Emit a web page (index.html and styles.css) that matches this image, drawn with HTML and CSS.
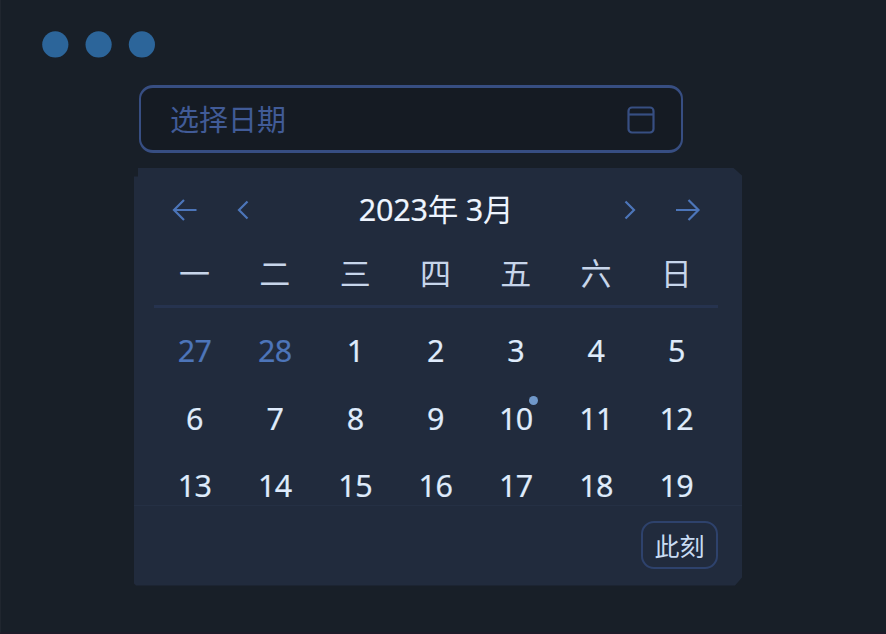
FILE: index.html
```html
<!DOCTYPE html>
<html lang="zh-CN">
<head>
<meta charset="utf-8">
<title>选择日期</title>
<link rel="stylesheet" href="styles.css">
</head>
<body>
<main class="window">
  <svg class="dots" width="114" height="27" viewBox="0 0 114 27"><circle cx="13.3" cy="13.4" r="13.1"/><circle cx="56.6" cy="13.4" r="13.1"/><circle cx="99.9" cy="13.4" r="13.1"/></svg>
  <div class="field">
    <span class="placeholder">选择日期</span>
    <svg class="calendar-icon" width="28" height="28" viewBox="0 0 28 28"><rect x="1.5" y="1.5" width="25" height="25" rx="3.5"/><path d="M1.5 8.5H26.5"/></svg>
  </div>
  <section class="panel">
    <header class="header">
      <svg class="arrow" width="26" height="24" viewBox="0 0 26 24"><path d="M12 2 2 12l10 10M2 12h22.5"/></svg>
      <svg class="chevron prev" width="12" height="24" viewBox="0 0 12 24"><path d="M10.5 3.5 2 12l8.5 8.5"/></svg>
      <h1 class="title">2023<span class="han">年</span> 3<span class="han">月</span></h1>
      <svg class="chevron next" width="12" height="24" viewBox="0 0 12 24"><path d="M1.5 3.5 10 12l-8.5 8.5"/></svg>
      <svg class="arrow" width="26" height="24" viewBox="0 0 26 24"><path d="M13.5 2l10 10-10 10M23.5 12H1"/></svg>
    </header>
    <div class="week"><span>一</span><span>二</span><span>三</span><span>四</span><span>五</span><span>六</span><span>日</span></div>
    <div class="days">
      <span class="muted">27</span><span class="muted">28</span><span>1</span><span>2</span><span>3</span><span>4</span><span>5</span>
      <span>6</span><span>7</span><span>8</span><span>9</span><span class="today">10</span><span>11</span><span>12</span>
      <span>13</span><span>14</span><span>15</span><span>16</span><span>17</span><span>18</span><span>19</span>
    </div>
    <footer class="footer"><button class="now">此刻</button></footer>
  </section>
</main>
</body>
</html>
```

FILE: styles.css
```css
* { box-sizing: border-box; }

body {
  margin: 0;
  background: #181f28;
  font-family: "Noto Sans", "Noto Sans CJK SC", sans-serif;
}

.window {
  height: 634px;
  padding: 31px 0 0 134px;
  border-left: 1px solid #20262f;
  border-bottom: 2px solid #1d1b29;
  overflow: hidden;
}

.dots {
  display: block;
  margin-left: -93px;
  fill: #2c659a;
}

.field {
  display: flex;
  align-items: center;
  justify-content: space-between;
  width: 544px;
  height: 68px;
  margin: 27px 0 0 4px;
  padding: 1px 26px 0 29px;
  border: 2px solid #374e82;
  border-top-width: 3px;
  border-bottom-width: 3px;
  border-radius: 14px;
  background: #151b23;
}

.placeholder {
  margin-top: -3px;
  color: #415b97;
  font: 29px/40px "Noto Sans CJK SC", sans-serif;
}

.calendar-icon {
  fill: none;
  stroke: #374f82;
  stroke-width: 2.2;
}

.panel {
  width: 608px;
  height: 418px;
  margin: 14.6px 0 0 -1px;
  padding: 21.4px 24px 0 20px;
  background: #212b3d;
  clip-path: polygon(4px 0, 599px 0, 608px 8px, 608px 410px, 601px 418px, 2px 418px, 0 416px, 0 9px, 4px 9px);
}

.header {
  display: flex;
  align-items: center;
  height: 42px;
  padding: 0 17px 0 18px;
}

.arrow, .chevron {
  flex: none;
  fill: none;
  stroke: #4c75b9;
  stroke-width: 2.2;
}

.prev { margin-left: 39px; }
.next { margin-right: 39px; }

.title {
  flex: 1;
  margin: -3px 0 0 -1px;
  color: #eef5ff;
  font-size: 30.5px;
  font-weight: 400;
  line-height: 40px;
  letter-spacing: -0.2px;
  text-align: center;
  -webkit-text-stroke: 0.2px;
}

.han {
  font-family: "Noto Sans CJK SC", sans-serif;
  -webkit-text-stroke: 0;
}

.week, .days {
  display: grid;
  grid-template-columns: repeat(7, 80.3px);
  text-align: center;
}

.week {
  height: 77px;
  border-bottom: 3px solid #26334f;
  color: #c7d5ea;
  font: 31px/82px "Noto Sans CJK SC", sans-serif;
  text-indent: 0.8px;
}

.days {
  grid-auto-rows: 67.7px;
  padding-top: 9px;
  color: #dfebfb;
  font-size: 30.5px;
  line-height: 67px;
  letter-spacing: -0.6px;
  text-indent: 0.8px;
  -webkit-text-stroke: 0.2px;
}

.muted { color: #4d75b9; }

.today { position: relative; }

.today::after {
  content: "";
  position: absolute;
  top: 11px;
  left: 53.5px;
  width: 9px;
  height: 9px;
  border-radius: 50%;
  background: #7098ca;
}

.footer {
  display: flex;
  justify-content: flex-end;
  margin: -15px -24px 0 -20px;
  padding: 14.5px 24px 0 0;
  border-top: 1px solid #253044;
}

.now {
  width: 77px;
  height: 48px;
  padding: 0;
  border: 2px solid #2e426c;
  border-radius: 13px;
  background: #212b3d;
  color: #c9dcf3;
  font: 25px/42px "Noto Sans CJK SC", sans-serif;
}
```
